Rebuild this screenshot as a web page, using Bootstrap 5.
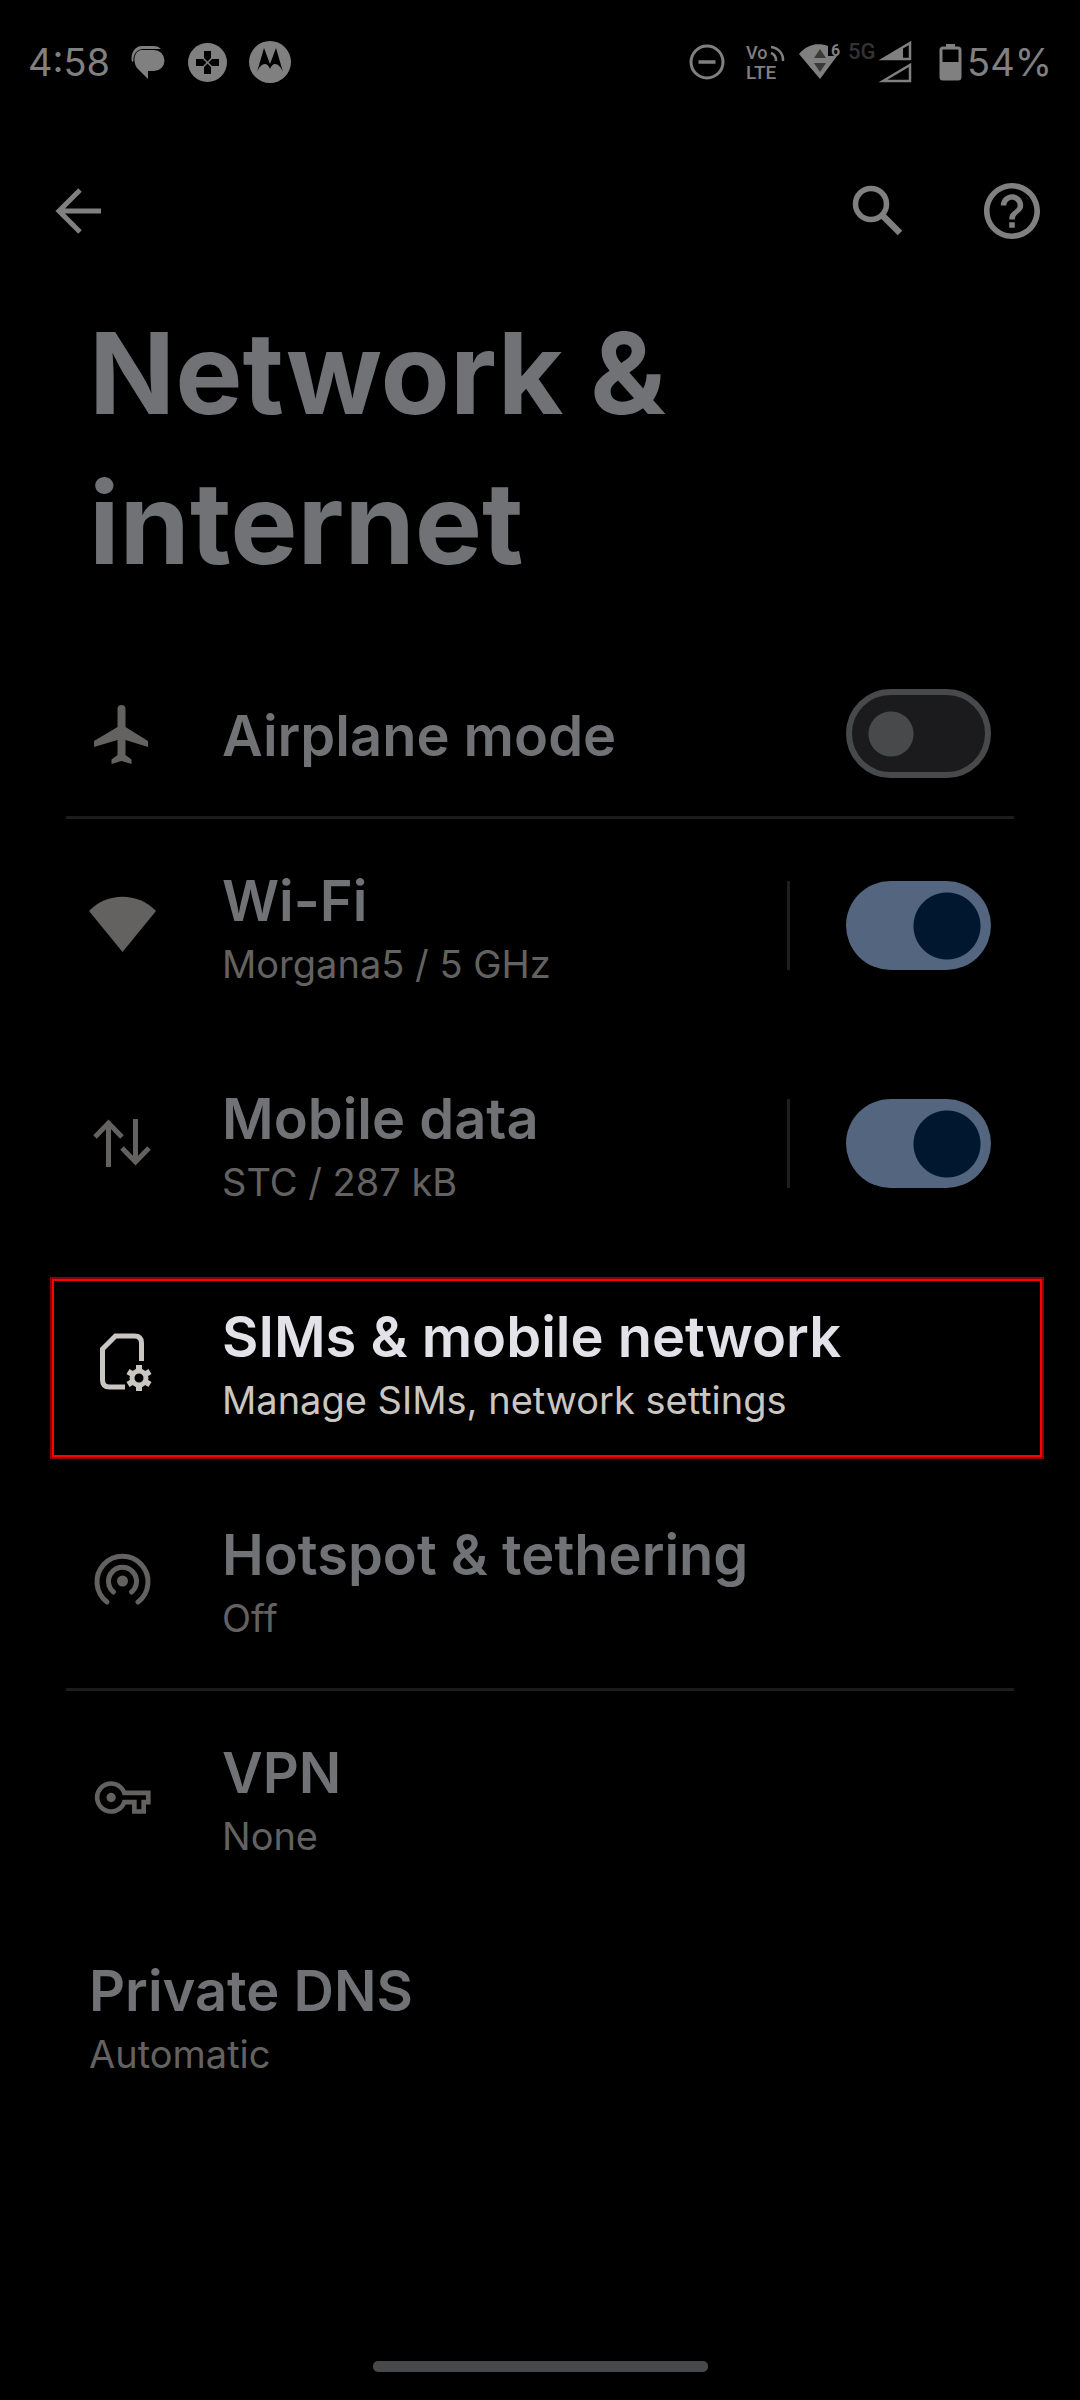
<!DOCTYPE html>
<html lang="en">
<head>
<meta charset="utf-8">
<meta name="viewport" content="width=device-width, initial-scale=1">
<title>Network &amp; internet</title>
<link href="https://cdn.jsdelivr.net/npm/bootstrap@5.3.0/dist/css/bootstrap.min.css" rel="stylesheet">
<style>
  body { background: #000; color: #717275; font-family: Inter, "Noto Sans", sans-serif; }
  svg { display: block; flex: none; overflow: visible; }
  a { color: inherit; text-decoration: none; }

  .status-bar { height: 124px; padding: 0 28px; color: #808080; font-size: 38px; line-height: 46px; }
  .notices { gap: 22px; }
  .tool-bar { height: 174px; padding: 0 40px 0 48px; color: #808080; }
  .tool-bar .btn { color: inherit; border: 0; }
  .tool-gap { gap: 82px; }
  .page-title { margin: 0 0 53px; padding: 0 89px; font-size: 113px; line-height: 150px; font-weight: 700; max-width: 900px; }

  .setting { min-height: 218px; padding: 0 89px; }
  .setting-short { min-height: 165px; }
  .setting-main { gap: 66px; color: #636261; }
  .setting-text { padding-top: 4px; }
  .setting-name { display: block; color: #717275; font-size: 56px; line-height: 68px; font-weight: 600; }
  .setting-note { display: block; margin-top: 6px; font-size: 38px; line-height: 46px; }
  .ruled::after { content: ""; position: absolute; left: 66px; right: 66px; bottom: -3px; height: 3px; background: #1c1c1d; }
  .v-rule { width: 3px; height: 89px; margin-right: 56px; background: #1f1f1f; }

  .picked .setting-main { color: #cac6c2; }
  .picked .setting-name { color: #e3e2e9; }
  .picked::before { content: ""; position: absolute; inset: 25px 36px 11px 50px; border: 2px solid #8a0000; box-shadow: inset 0 0 0 2px #f00; }

  .form-switch .form-check-input.toggle {
    width: 145px; height: 89px; margin: 0; border-radius: 45px; float: none; box-shadow: none;
    background-origin: border-box; background-position: 0 0; background-size: 100% 100%; background-repeat: no-repeat;
    background-color: #1b1b1d; border: 6px solid #48494a;
    background-image: radial-gradient(circle at 45px 45px, #48494a 22px, transparent 23px);
  }
  .form-switch .form-check-input.toggle:checked {
    background-color: #54657f; border: 0;
    background-image: radial-gradient(circle at 101px 45px, #00182f 33px, transparent 34px);
  }
  .home-bar { width: 335px; height: 11px; border-radius: 5px; background: #48494a; margin-bottom: 28px; }
</style>
</head>
<body>
<div class="d-flex flex-column min-vh-100">

  <header class="status-bar d-flex align-items-center justify-content-between">
    <div class="notices d-flex align-items-center">
      <span>4:58</span>
      <svg width="34" height="34" viewBox="2 0 34 34" fill="currentColor" aria-hidden="true">
        <path d="M12 5h12a10.500 10.500 0 0 1 0 21h-6v8L7 23C2 15 5 5 12 5z"/>
        <path d="M2 17C0 8 5 1 12 1h11c4 0 6 1 8 3H13C7 4 3 9 3.500 16z"/>
      </svg>
      <svg width="39" height="39" viewBox="0 0 39 39" aria-hidden="true">
        <circle cx="19.500" cy="19.500" r="19.500" fill="#808080"/>
        <path fill="#000" d="M16 8h7v7l-3.500 3.500L16 15zM16 31h7v-7l-3.500-3.500L16 24zM8 16v7h7l3.500-3.500L15 16zM31 16v7h-7l-3.500-3.500L24 16z"/>
      </svg>
      <svg width="42" height="42" viewBox="0 0 42 42" aria-hidden="true">
        <circle cx="21" cy="21" r="21" fill="#808080"/>
        <path fill="#000" d="M8 31 15 7l6 16 6-16 7 24c-2-5-5-8-8-8-2 0-4 2-5 5-1-3-3-5-5-5-3 0-6 3-8 8z"/>
      </svg>
    </div>
    <div class="d-flex align-items-center">
      <svg width="274" height="42" viewBox="0 0 274 42" fill="none" stroke="currentColor" role="img" aria-label="Do not disturb, VoLTE, Wi-Fi, signal, battery">
        <circle cx="18" cy="21" r="16" stroke-width="3"/>
        <path d="M9.500 21h17" stroke-width="3.500"/>
        <g fill="currentColor" stroke="none" font-family="Roboto, sans-serif" font-weight="500">
          <text x="57" y="18" font-size="18">Vo</text>
          <text x="57" y="38" font-size="19">LTE</text>
          <text x="159" y="18" font-size="22" fill="#333">5G</text>
          <text x="142" y="15" font-size="16" font-weight="700">6</text>
        </g>
        <path d="M82 12a8 8 0 0 1 5 8M82 6a13 13 0 0 1 12 14" stroke-width="2.500"/>
        <path d="M110 13c9-11 21-11 29-8v10h9l-17 23z" fill="currentColor" stroke="none"/>
        <path d="M125 17l6-9 6 9zM125 22l6 9 6-9z" fill="#3a3a3a" stroke="none"/>
        <path d="M194 18 221 2v16z" stroke-width="2.500"/>
        <path d="M191 19 214 6v13z" fill="currentColor" stroke="none"/>
        <path d="M194 40 221 24v16z" stroke-width="2.500"/>
        <path d="M257 3h9v3h-9z" fill="currentColor" stroke="none"/>
        <rect x="252" y="7" width="19" height="31" rx="2" stroke-width="3"/>
        <path d="M252 21h19v17h-19z" fill="currentColor" stroke="none"/>
      </svg>
      <span class="ps-1">54%</span>
    </div>
  </header>

  <nav class="tool-bar d-flex align-items-center justify-content-between" aria-label="Page">
    <button type="button" class="btn p-2" aria-label="Back">
      <svg width="46" height="46" viewBox="0 0 46 46" fill="none" stroke="currentColor" stroke-width="5" aria-hidden="true"><path d="M45 23H4M24 2 3 23l21 21"/></svg>
    </button>
    <div class="tool-gap d-flex align-items-center">
      <button type="button" class="btn p-0" aria-label="Search">
        <svg width="50" height="50" viewBox="0 0 50 50" fill="none" stroke="currentColor" aria-hidden="true"><circle cx="19" cy="18" r="15.500" stroke-width="5.500"/><path d="M30 29l18 18" stroke-width="6.500"/></svg>
      </button>
      <button type="button" class="btn p-0" aria-label="Help">
        <svg width="56" height="56" viewBox="2 2 20 20" fill="currentColor" aria-hidden="true"><path d="M11 18h2v-2h-2v2zm1-16C6.480 2 2 6.480 2 12s4.480 10 10 10 10-4.480 10-10S17.520 2 12 2zm0 18c-4.410 0-8-3.590-8-8s3.590-8 8-8 8 3.590 8 8-3.590 8-8 8zm0-14c-2.210 0-4 1.790-4 4h2c0-1.100.9-2 2-2s2 .9 2 2c0 2-3 1.750-3 5h2c0-2.250 3-2.500 3-5 0-2.210-1.790-4-4-4z"/></svg>
      </button>
    </div>
  </nav>

  <main class="flex-grow-1">
    <h1 class="page-title">Network &amp; internet</h1>

    <div class="setting setting-short ruled position-relative d-flex align-items-center">
      <label class="setting-main d-flex align-items-center flex-grow-1" for="airplane">
        <svg width="67" height="67" viewBox="0 0 67 67" fill="currentColor" aria-hidden="true"><path d="M28.500 9a4 4 0 0 1 8 0v18L59 41v6l-22.500-7v15l6 4.500v4.500l-10-3-10 3v-4.500l6-4.500V40L5 47v-6l23.500-14z"/></svg>
        <span class="setting-text"><span class="setting-name">Airplane mode</span></span>
      </label>
      <div class="form-check form-switch p-0 m-0 lh-1"><input class="form-check-input toggle d-block" type="checkbox" role="switch" id="airplane"></div>
    </div>

    <div class="setting position-relative d-flex align-items-center">
      <a href="#wifi" class="setting-main d-flex align-items-center flex-grow-1">
        <svg width="67" height="67" viewBox="0 0 67 67" fill="currentColor" aria-hidden="true"><path d="M0 19C18 0 49 0 67 19L33.500 60z"/></svg>
        <span class="setting-text"><span class="setting-name" id="wifi-name">Wi-Fi</span><span class="setting-note">Morgana5 / 5 GHz</span></span>
      </a>
      <div class="v-rule"></div>
      <div class="form-check form-switch p-0 m-0 lh-1"><input class="form-check-input toggle d-block" type="checkbox" role="switch" aria-labelledby="wifi-name" checked></div>
    </div>

    <div class="setting position-relative d-flex align-items-center">
      <a href="#data" class="setting-main d-flex align-items-center flex-grow-1">
        <svg width="67" height="67" viewBox="0 0 67 67" fill="none" stroke="currentColor" stroke-width="5" aria-hidden="true"><path d="M19.500 57V14M6 27l13.500-14L33 27M46.500 9v43M33 38l13.500 14L60 38"/></svg>
        <span class="setting-text"><span class="setting-name" id="data-name">Mobile data</span><span class="setting-note">STC / 287 kB</span></span>
      </a>
      <div class="v-rule"></div>
      <div class="form-check form-switch p-0 m-0 lh-1"><input class="form-check-input toggle d-block" type="checkbox" role="switch" aria-labelledby="data-name" checked></div>
    </div>

    <div class="setting picked position-relative d-flex align-items-center">
      <a href="#sims" class="setting-main d-flex align-items-center flex-grow-1">
        <svg width="67" height="67" viewBox="0 0 67 67" aria-hidden="true">
          <path d="M52.500 33V15q0-7-7-7H26.500L13.500 21v31q0 7 7 7H36" fill="none" stroke="currentColor" stroke-width="5"/>
          <circle cx="50" cy="50" r="7" fill="none" stroke="currentColor" stroke-width="5"/>
          <path d="M50 37v6M50 57v6M39 43.500l5 3M56 53.500l5 3M39 56.500l5-3M56 46.500l5-3" stroke="currentColor" stroke-width="6"/>
        </svg>
        <span class="setting-text"><span class="setting-name">SIMs &amp; mobile network</span><span class="setting-note">Manage SIMs, network settings</span></span>
      </a>
    </div>

    <div class="setting ruled position-relative d-flex align-items-center">
      <a href="#hotspot" class="setting-main d-flex align-items-center flex-grow-1">
        <svg width="67" height="67" viewBox="0 0 67 67" fill="none" stroke="currentColor" stroke-width="5" stroke-linecap="round" aria-hidden="true">
          <circle cx="33.500" cy="35" r="5.500" fill="currentColor" stroke="none"/>
          <path d="M24.500 46a14 14 0 1 1 18 0M18 56a25.500 25.500 0 1 1 31 0"/>
        </svg>
        <span class="setting-text"><span class="setting-name">Hotspot &amp; tethering</span><span class="setting-note">Off</span></span>
      </a>
    </div>

    <div class="setting position-relative d-flex align-items-center">
      <a href="#vpn" class="setting-main d-flex align-items-center flex-grow-1">
        <svg width="67" height="67" viewBox="-2.500 -2.400 28.800 28.800" fill="currentColor" aria-hidden="true">
          <path d="M22 19h-6v-4h-2.680c-1.140 2.420-3.600 4-6.320 4-3.860 0-7-3.140-7-7s3.140-7 7-7c2.720 0 5.170 1.580 6.320 4H24v6h-2v4zm-4-2h2v-4h2v-2H11.940l-.23-.67C11.010 8.340 9.110 7 7 7c-2.760 0-5 2.240-5 5s2.240 5 5 5c2.110 0 4.010-1.340 4.710-3.330l.23-.67H18v4z"/>
          <circle cx="7" cy="12" r="2"/>
        </svg>
        <span class="setting-text"><span class="setting-name">VPN</span><span class="setting-note">None</span></span>
      </a>
    </div>

    <div class="setting position-relative d-flex align-items-center">
      <a href="#dns" class="setting-main d-flex align-items-center flex-grow-1">
        <span class="setting-text"><span class="setting-name">Private DNS</span><span class="setting-note">Automatic</span></span>
      </a>
    </div>
  </main>

  <div class="home-bar mx-auto"></div>
</div>
<script src="https://cdn.jsdelivr.net/npm/bootstrap@5.3.0/dist/js/bootstrap.bundle.min.js"></script>
</body>
</html>
